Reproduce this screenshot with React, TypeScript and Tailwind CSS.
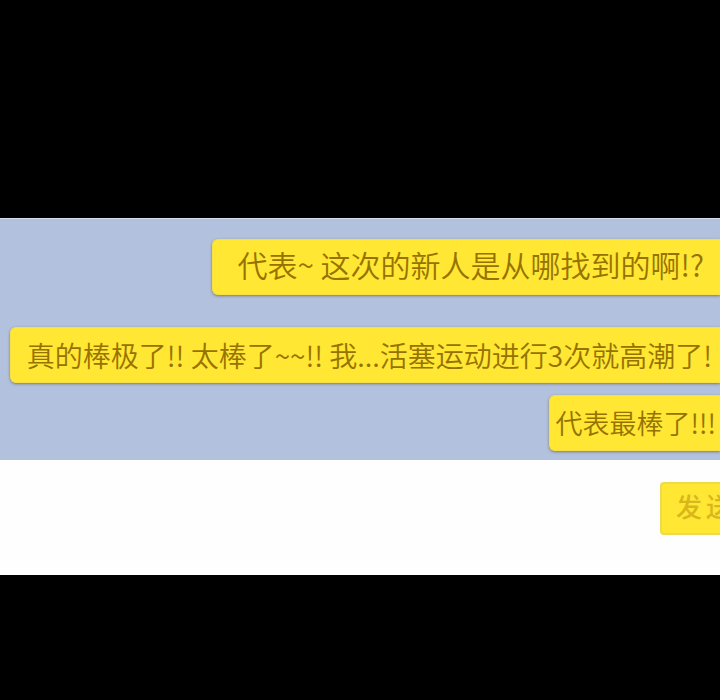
const bubble =
  "flex h-14 items-center whitespace-nowrap rounded-l-md border border-r-0 border-[#f5df48] bg-[#ffe733] text-[#967300] shadow-[0_1px_3px_#7d7a68]";

export default function App() {
  return (
    <div className="min-h-screen overflow-hidden bg-black pt-[218px] font-['Noto_Sans_CJK_SC',sans-serif]">
      <main>
        <ul className="flex flex-col items-end border-t border-[#d5dcea] bg-[#b2c1de] pt-5 pb-[9px]">
          <li className={`${bubble} pr-4 pb-1.5 pl-6 text-[30px] font-[350]`}>
            代表~ 这次的新人是从哪找到的啊!?
          </li>
          <li className={`${bubble} mt-8 pr-2 pl-4 text-[28px] font-[350]`}>
            真的棒极了!! 太棒了~~!! 我...活塞运动进行3次就高潮了!
          </li>
          <li className={`${bubble} mt-3 pr-1 pl-1.5 text-[27px] font-[350]`}>
            代表最棒了!!!
          </li>
        </ul>
        <form
          className="flex h-[115px] justify-end overflow-hidden bg-[#fefefe] pt-[22px]"
          onSubmit={(event) => event.preventDefault()}
        >
          <button
            type="submit"
            className="-mr-9 flex h-[53px] w-24 shrink-0 items-center gap-1 rounded border-2 border-[#eedb4b] bg-[#ffe733] pb-1.5 pl-3.5 text-[26px] font-medium text-[#d7b719]"
          >
            <span>发</span>
            <span>送</span>
          </button>
        </form>
      </main>
    </div>
  );
}
